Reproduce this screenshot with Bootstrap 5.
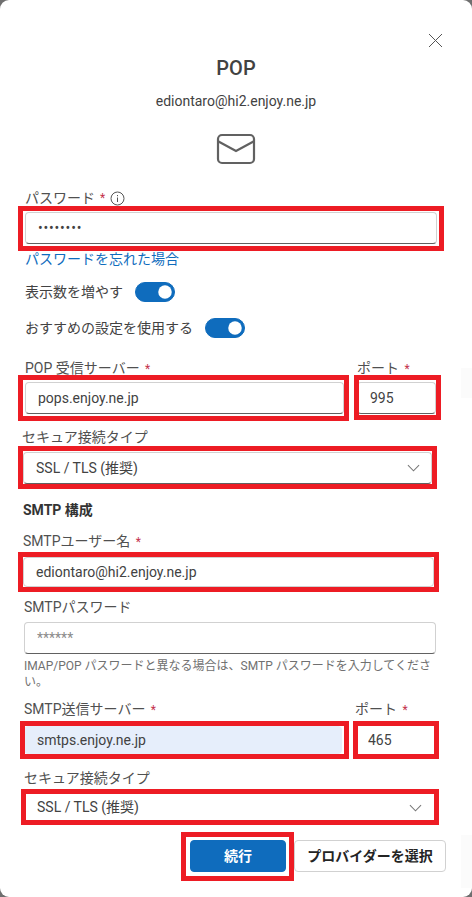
<!DOCTYPE html>
<html lang="ja">
<head>
    <meta charset="UTF-8">
    <meta name="viewport" content="width=device-width, initial-scale=1.0">
    <title>POP</title>
    <link href="https://cdn.jsdelivr.net/npm/bootstrap@5.3.0/dist/css/bootstrap.min.css" rel="stylesheet">
    <style>
        body { background: #6f6f6f; font-family: Roboto, "Noto Sans CJK JP", sans-serif; font-size: 14px; color: #424242; overflow: hidden; }
        .sheet { position: relative; background: #fff; height: 897px; border-radius: 9px; padding-top: 33px; }
        .close-x { display: block; margin: 0 29px 0 auto; width: 15px; height: 15px; }
        .sheet-title { font-size: 20px; font-weight: 500; line-height: 28px; margin: 6px 0 0; color: #424242; }
        .sheet-mail { line-height: 20px; margin-top: 9px; color: #424242; }
        .mail-icon { display: block; margin: 22px auto 0; width: 40px; height: 32px; }

        .field-label { display: block; height: 20px; line-height: 20px; margin: 0 0 4px; color: #505050; white-space: nowrap; }
        .req { color: #c4314b; font-size: 12px; line-height: 1; margin-left: 2px; }
        .text-input.form-control, .text-input.form-select { height: 32px; font-size: 14px; color: #424242; border: 1px solid #d1d1d1; border-bottom-color: #616161; border-radius: 4px; padding: 0 12px; box-shadow: none; }
        .text-input.form-select { background-image: url("data:image/svg+xml,%3Csvg xmlns='http://www.w3.org/2000/svg' viewBox='0 0 14 8'%3E%3Cpath d='M1 1l6 6 6-6' fill='none' stroke='%23777' stroke-width='1.1'/%3E%3C/svg%3E"); background-size: 13px 8px; background-position: right 11px center; }
        .text-input::placeholder { color: #8a8a8a; }
        .filled { background: #e6eefb !important; border-color: #e6eefb !important; }

        .block-pw { margin: 23px 35px 0 25px; }
        .block-pw .req { margin-left: 5px; }
        .block-pw .text-input { letter-spacing: 0.8px; }
        .info-mark { margin-left: 5px; }
        .forgot { display: block; margin: 5px 0 0 25px; line-height: 20px; color: #0f6cbd; text-decoration: none; }
        .switch-row { margin-left: 25px; gap: 12px; height: 20px; }
        .switch-one { margin-top: 13px; }
        .switch-two { margin-top: 16px; }
        .switch-row .form-check { margin: 0; padding: 0; min-height: 0; }
        .switch-row .form-check-input { width: 40px; height: 20px; margin: 0; float: none; display: block; background-color: #0f6cbd; border-color: #0f6cbd; }
        .pair { display: flex; gap: 13px; }
        .pair .grow-part { flex: 1 1 auto; min-width: 0; }
        .pair .port-part { width: 79px; flex: none; }
        .pair .port-part .text-input { padding: 0 10px 0 12px; }
        .pair-pop { margin: 20px 36px 0 25px; }
        .block-sec { margin: 13px 40px 0 23px; }
        .block-sec .field-label { margin-bottom: 5px; margin-left: -1px; }
        .smtp-head { margin: 16px 0 0 23px; font-weight: 700; line-height: 20px; color: #333; }
        .block-user { margin: 11px 38px 0 23px; }
        .block-user .field-label { margin-bottom: 6px; }
        .block-user .text-input { height: 30px; border-bottom-color: #d1d1d1; }
        .block-pass { margin: 10px 36px 0 24px; }
        .block-pass .field-label { margin-bottom: 5px; }
        .hint { font-size: 12px; line-height: 16px; color: #707070; margin: 4px 0 0; }
        .pair-smtp { margin: 9px 38px 0 24px; }
        .pair-smtp .field-label { margin-bottom: 7px; }
        .pair-smtp .text-input { height: 28px; }
        .pair-smtp .port-part .text-input { border-color: #fff; }
        .block-sec-two { margin: 14px 38px 0 24px; }
        .block-sec-two .field-label { margin-bottom: 6px; }
        .block-sec-two .text-input { height: 27px; border-color: #fff; }
        .actions { margin: 19px 26px 0 0; gap: 8px; }
        .actions .btn { height: 32px; font-size: 14px; font-weight: 600; padding: 0; border-radius: 4px; }
        .go-btn { width: 96px; background: #0f6cbd; border-color: #0f6cbd; color: #fff; }
        .pick-btn { width: 152px; background: #fff; border-color: #d1d1d1; color: #242424; }

        /* faint patches at the right edge of the screenshot */
        .edge-patch { position: absolute; right: 0; width: 11px; background: #fbfbfb; }
        .p-top { top: 368px; height: 30px; }
        .p-bottom { top: 835px; height: 53px; }

        /* red callouts drawn over the screenshot */
        .callout { position: absolute; border: 5px solid #ed1c24; pointer-events: none; }
        .c-pw { left: 18px; top: 206px; width: 426px; height: 45px; }
        .c-pop { left: 18px; top: 375px; width: 331px; height: 46px; }
        .c-port { left: 354px; top: 375px; width: 87px; height: 45px; }
        .c-sec { left: 18px; top: 446px; width: 419px; height: 43px; }
        .c-user { left: 18px; top: 552px; width: 421px; height: 40px; }
        .c-srv { left: 20px; top: 721px; width: 329px; height: 38px; }
        .c-port2 { left: 353px; top: 721px; width: 86px; height: 38px; }
        .c-sec2 { left: 21px; top: 789px; width: 418px; height: 36px; }
        .c-go { left: 181px; top: 832px; width: 113px; height: 49px; }
    </style>
</head>
<body>
    <div class="sheet">
        <svg class="close-x" viewBox="0 0 15 15"><path d="M1 1l13 13M14 1L1 14" stroke="#555" stroke-width="1" fill="none"/></svg>
        <h1 class="sheet-title text-center">POP</h1>
        <div class="sheet-mail text-center">ediontaro@hi2.enjoy.ne.jp</div>
        <svg class="mail-icon" viewBox="0 0 40 32"><rect x="2" y="2" width="36" height="28" rx="4" fill="none" stroke="#616161" stroke-width="2.2"/><path d="M2.5 8.5L20 18l17.5-9.5" fill="none" stroke="#616161" stroke-width="2.2"/></svg>

        <div class="block-pw">
            <label class="field-label d-flex align-items-center">パスワード<span class="req">*</span>
                <svg class="info-mark" width="15" height="15" viewBox="0 0 15 15"><circle cx="7.5" cy="7.5" r="6.5" fill="none" stroke="#555"/><path d="M7.5 6.5v4.5M7.5 4v1.2" stroke="#555" fill="none"/></svg>
            </label>
            <input class="form-control text-input" type="password" value="12345678">
        </div>
        <a class="forgot" href="#">パスワードを忘れた場合</a>

        <div class="d-flex align-items-center switch-row switch-one">
            <span>表示数を増やす</span>
            <div class="form-check form-switch"><input class="form-check-input" type="checkbox" checked></div>
        </div>
        <div class="d-flex align-items-center switch-row switch-two">
            <span>おすすめの設定を使用する</span>
            <div class="form-check form-switch"><input class="form-check-input" type="checkbox" checked></div>
        </div>

        <div class="pair pair-pop">
            <div class="grow-part">
                <label class="field-label">POP 受信サーバー <span class="req">*</span></label>
                <input class="form-control text-input" value="pops.enjoy.ne.jp">
            </div>
            <div class="port-part">
                <label class="field-label">ポート <span class="req">*</span></label>
                <input class="form-control text-input" value="995">
            </div>
        </div>

        <div class="block-sec">
            <label class="field-label">セキュア接続タイプ</label>
            <select class="form-select text-input"><option>SSL / TLS (推奨)</option></select>
        </div>

        <div class="smtp-head">SMTP 構成</div>

        <div class="block-user">
            <label class="field-label">SMTPユーザー名 <span class="req">*</span></label>
            <input class="form-control text-input" value="ediontaro@hi2.enjoy.ne.jp">
        </div>

        <div class="block-pass">
            <label class="field-label">SMTPパスワード</label>
            <input class="form-control text-input" placeholder="******">
            <p class="hint">IMAP/POP パスワードと異なる場合は、SMTP パスワードを入力してください。</p>
        </div>

        <div class="pair pair-smtp">
            <div class="grow-part">
                <label class="field-label">SMTP送信サーバー <span class="req">*</span></label>
                <input class="form-control text-input filled" value="smtps.enjoy.ne.jp">
            </div>
            <div class="port-part">
                <label class="field-label">ポート <span class="req">*</span></label>
                <input class="form-control text-input" value="465">
            </div>
        </div>

        <div class="block-sec-two">
            <label class="field-label">セキュア接続タイプ</label>
            <select class="form-select text-input"><option>SSL / TLS (推奨)</option></select>
        </div>

        <div class="d-flex justify-content-end actions">
            <button class="btn go-btn" type="button">続行</button>
            <button class="btn pick-btn" type="button">プロバイダーを選択</button>
        </div>

        <div class="edge-patch p-top"></div>
        <div class="edge-patch p-bottom"></div>

        <div class="callout c-pw"></div>
        <div class="callout c-pop"></div>
        <div class="callout c-port"></div>
        <div class="callout c-sec"></div>
        <div class="callout c-user"></div>
        <div class="callout c-srv"></div>
        <div class="callout c-port2"></div>
        <div class="callout c-sec2"></div>
        <div class="callout c-go"></div>
    </div>
    <script src="https://cdn.jsdelivr.net/npm/bootstrap@5.3.0/dist/js/bootstrap.bundle.min.js"></script>
</body>
</html>
